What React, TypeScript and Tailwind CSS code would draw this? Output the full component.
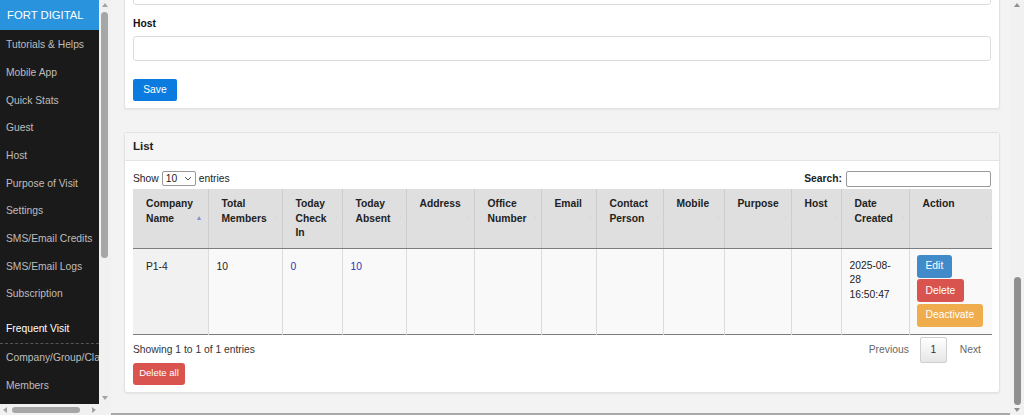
import type { ReactNode } from 'react';

const FONT = { fontFamily: '"Liberation Sans", Arial, sans-serif' };

const MENU = [
  'Tutorials & Helps',
  'Mobile App',
  'Quick Stats',
  'Guest',
  'Host',
  'Purpose of Visit',
  'Settings',
  'SMS/Email Credits',
  'SMS/Email Logs',
  'Subscription',
];

const COLS: { label: ReactNode; w: number }[] = [
  { label: <>Company<br />Name</>, w: 75 },
  { label: <>Total<br />Members</>, w: 74 },
  { label: <>Today<br />Check<br />In</>, w: 60 },
  { label: <>Today<br />Absent</>, w: 64 },
  { label: 'Address', w: 68 },
  { label: <>Office<br />Number</>, w: 67 },
  { label: 'Email', w: 55 },
  { label: <>Contact<br />Person</>, w: 67 },
  { label: 'Mobile', w: 61 },
  { label: 'Purpose', w: 67 },
  { label: 'Host', w: 50 },
  { label: <>Date<br />Created</>, w: 68 },
  { label: 'Action', w: 83 },
];

function Sidebar() {
  return (
    <div className="flex h-full shrink-0 flex-col">
      <div className="flex min-h-0 flex-1">
        <nav className="w-[99px] shrink-0 overflow-hidden whitespace-nowrap bg-[#1b1a1a]">
          <div className="flex h-[30px] items-center bg-[#2a93dd] pl-[7px] text-[11.3px] text-white">FORT DIGITAL</div>
          <ul className="pt-[1px]">
            {MENU.map(m => (
              <li key={m} className="flex h-[27.7px] items-center pl-[6px] text-[10.3px] text-[#bdbdbd]">{m}</li>
            ))}
          </ul>
          <div className="mt-[7px] flex h-[29px] items-center border-b border-dashed border-[#555] pl-[6px] text-[10.3px] text-white">
            Frequent Visit
          </div>
          <div className="flex h-[28px] items-center pl-[6px] text-[10.3px] text-[#bdbdbd]">Company/Group/Class</div>
          <div className="flex h-[27px] items-center pl-[6px] text-[10.3px] text-[#bdbdbd]">Members</div>
        </nav>
        {/* sidebar vertical scrollbar */}
        <div className="relative w-[12px] shrink-0 bg-[#f1f1f1]">
          <span className="absolute left-[3px] top-[3px] h-0 w-0 border-x-[3px] border-b-[4px] border-x-transparent border-b-[#a3a3a3]" />
          <div className="absolute left-[2px] top-[12px] h-[246px] w-[7px] rounded-full bg-[#a6a6a6]" />
          <span className="absolute bottom-[4px] left-[3px] h-0 w-0 border-x-[3px] border-t-[4px] border-x-transparent border-t-[#a3a3a3]" />
        </div>
      </div>
      {/* sidebar horizontal scrollbar */}
      <div className="relative h-[11px] w-[111px] shrink-0 bg-[#f1f1f1]">
        <span className="absolute left-[3px] top-[3px] h-0 w-0 border-y-[3px] border-r-[4px] border-y-transparent border-r-[#a3a3a3]" />
        <div className="absolute left-[12px] top-[3px] h-[6px] w-[68px] rounded-full bg-[#a6a6a6]" />
        <span className="absolute left-[92px] top-[3px] h-0 w-0 border-y-[3px] border-l-[4px] border-y-transparent border-l-[#a3a3a3]" />
      </div>
    </div>
  );
}

function Btn({ children, color }: { children: ReactNode; color: string }) {
  return (
    <div className={`inline-flex h-[23px] items-center rounded-[3px] px-[9px] text-[10.3px] text-white ${color}`}>{children}</div>
  );
}

function ListCard() {
  return (
    <div className="mt-[23px] rounded-[3px] border border-[#e2e2e2] bg-white shadow-[0_1px_2px_rgba(0,0,0,0.06)]">
      <div className="flex h-[28px] items-center border-b border-[#e4e4e4] bg-[#f5f5f5] pl-[8px] text-[11.5px] font-bold text-[#222]">
        List
      </div>
      <div className="px-[8px] pb-[7px] pt-[9px]">
        <div className="flex h-[17px] items-center justify-between text-[10.3px] text-[#222]">
          <div className="flex items-center gap-[3px]">
            <span>Show</span>
            <div className="flex h-[15px] w-[34px] items-center justify-between rounded-[2px] border border-[#999] bg-white pl-[3px] pr-[3px]">
              <span>10</span>
              <svg width="8" height="5" viewBox="0 0 8 5" fill="none" stroke="#555" strokeWidth="1">
                <path d="M1 1l3 3 3-3" />
              </svg>
            </div>
            <span>entries</span>
          </div>
          <div className="flex items-center gap-[4px]">
            <span className="font-bold">Search:</span>
            <div className="h-[16px] w-[145px] rounded-[2px] border border-[#999] bg-white" />
          </div>
        </div>
        <table className="mt-[2px] w-[859px] table-fixed border-collapse text-[10.3px]">
          <colgroup>
            {COLS.map((c, i) => (
              <col key={i} style={{ width: c.w }} />
            ))}
          </colgroup>
          <thead>
            <tr className="h-[59px] bg-[#dfdfdf]">
              {COLS.map((c, i) => (
                <th
                  key={i}
                  className="relative border-b border-l border-b-[#7d7d7d] border-l-[#cdcdcd] pl-[13px] pt-[8px] text-left align-top font-bold leading-[14.5px] text-[#222] first:border-l-0"
                >
                  {c.label}
                  {i === 0 ? (
                    <span className="absolute right-[5px] top-[22px] text-[7px] text-[#8d8fd0]">▲</span>
                  ) : (
                    <span className="absolute right-[5px] top-[26px] h-[4px] w-px bg-[#d8d8d8]" />
                  )}
                </th>
              ))}
            </tr>
          </thead>
          <tbody>
            <tr className="h-[86px] border-b border-[#7d7d7d] bg-[#f9f9f9] text-[#222]">
              <td className="bg-[#f1f1f1] pl-[13px] pt-[10px] align-top">P1-4</td>
              <td className="border-l border-[#dcdcdc] pl-[8px] pt-[10px] align-top">10</td>
              <td className="border-l border-[#dcdcdc] pl-[8px] pt-[10px] align-top text-[#2a33b8]">0</td>
              <td className="border-l border-[#dcdcdc] pl-[8px] pt-[10px] align-top text-[#2a33b8]">10</td>
              {Array.from({ length: 7 }).map((_, i) => (
                <td key={i} className="border-l border-[#dcdcdc]" />
              ))}
              <td className="border-l border-[#dcdcdc] pl-[8px] pt-[10px] align-top leading-[14.5px]">
                2025-08-
                <br />
                28
                <br />
                16:50:47
              </td>
              <td className="border-l border-[#dcdcdc] pl-[7px] pt-[6px] align-top">
                <div className="flex flex-col items-start gap-[1.5px]">
                  <Btn color="bg-[#428bca]">Edit</Btn>
                  <Btn color="bg-[#d9534f]">Delete</Btn>
                  <Btn color="bg-[#f0ad4e]">Deactivate</Btn>
                </div>
              </td>
            </tr>
          </tbody>
        </table>
        <div className="mt-[2px] flex h-[26px] items-center justify-between text-[10.3px]">
          <span className="text-[#333]">Showing 1 to 1 of 1 entries</span>
          <div className="flex items-center pr-[10px] text-[#666]">
            <span className="mr-[11px]">Previous</span>
            <div className="flex h-[26px] w-[27px] items-center justify-center rounded-[2px] border border-[#cfcfcf] bg-gradient-to-b from-white to-[#e6e6e6] text-[#333]">
              1
            </div>
            <span className="ml-[13px]">Next</span>
          </div>
        </div>
        <div className="flex h-[22px] w-[52px] items-center justify-center rounded-[3px] bg-[#d9534f] text-[9.5px] text-white">
          Delete all
        </div>
      </div>
    </div>
  );
}

function TopCard() {
  return (
    <div className="-mt-[21px] rounded-[3px] border border-[#e2e2e2] bg-white px-[8px] pb-[7px] shadow-[0_1px_2px_rgba(0,0,0,0.06)]">
      <div className="h-[25px] rounded-[3px] border border-[#dcdcdc]" />
      <label className="mt-[12px] block text-[10.3px] font-bold leading-[14px] text-[#111]">Host</label>
      <div className="mt-[5px] h-[25px] rounded-[3px] border border-[#dcdcdc]" />
      <div className="mt-[18px] flex h-[22px] w-[44px] items-center justify-center rounded-[2px] bg-[#0b7be0] text-[10.3px] text-white">
        Save
      </div>
    </div>
  );
}

export default function App() {
  return (
    <div className="flex h-[415px] w-[1024px] overflow-hidden bg-[#f3f3f3]" style={FONT}>
      <Sidebar />
      <main className="flex min-w-0 flex-1 flex-col">
        <div className="min-h-0 flex-1 pl-[13px] pr-[10px]">
          <TopCard />
          <ListCard />
        </div>
        <div className="h-[2px] shrink-0 bg-[#a8a8a8]" />
      </main>
      {/* page scrollbar */}
      <div className="relative w-[14px] shrink-0 bg-[#f1f1f1]">
        <span className="absolute left-[4px] top-[3px] h-0 w-0 border-x-[3px] border-b-[4px] border-x-transparent border-b-[#8f8f8f]" />
        <div className="absolute left-[4px] top-[277px] h-[128px] w-[7px] rounded-full bg-[#8f8f8f]" />
        <span className="absolute bottom-[3px] left-[4px] h-0 w-0 border-x-[3px] border-t-[4px] border-x-transparent border-t-[#8f8f8f]" />
      </div>
    </div>
  );
}
